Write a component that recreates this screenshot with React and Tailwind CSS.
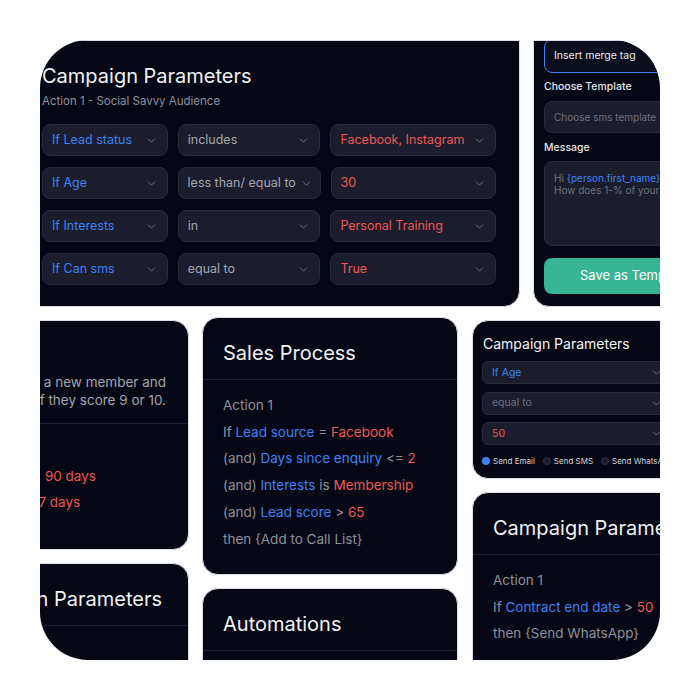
import { ChevronDown } from 'lucide-react';

// Colour tokens used across the cards
const BLUE = 'text-[#3b82f6]';
const RED = 'text-[#ec5854]';
const GRAY = 'text-[#8e919c]';

const BIG_ROWS = [
  { field: 'If Lead status', op: 'includes', value: 'Facebook, Instagram' },
  { field: 'If Age', op: 'less than/ equal to', value: '30' },
  { field: 'If Interests', op: 'in', value: 'Personal Training' },
  { field: 'If Can sms', op: 'equal to', value: 'True' },
];

function Select({ children, tone, className = '' }) {
  return (
    <div
      className={`flex items-center justify-between gap-1 rounded-lg border border-[#2a2b3a] bg-[#1c1d2c] pl-[9px] pr-[9px] ${className}`}
    >
      <span className={`whitespace-nowrap ${tone}`}>{children}</span>
      <ChevronDown size={13} strokeWidth={1.8} className="shrink-0 text-[#6b6e7b]" />
    </div>
  );
}

function Card({ className = '', children }) {
  return (
    <div className={`shrink-0 overflow-hidden rounded-[16px] border border-[#dcdde3] bg-[#050714] ${className}`}>
      {children}
    </div>
  );
}

function CardHead({ title, className = '' }) {
  return (
    <div className={`border-b border-[#1d2030] px-5 pt-[21px] pb-3 ${className}`}>
      <h3 className="whitespace-nowrap text-[20px] leading-7 text-[#f1f2f4]">{title}</h3>
    </div>
  );
}

// ─── Top row ────────────────────────────────────────────────────────────────
function BigParams() {
  return (
    <Card className="w-[499px] h-[267px] rounded-t-none pl-5 pr-[23px] pt-[21px]">
      <h2 className="whitespace-nowrap text-[20px] leading-7 text-[#f1f2f4]">Campaign Parameters</h2>
      <p className="mt-[3px] whitespace-nowrap text-[11.5px] leading-4 text-[#8e919c]">
        Action 1 - Social Savvy Audience
      </p>
      <div className="mt-[15px] flex flex-col gap-[11px] text-[12.5px]">
        {BIG_ROWS.map(r => (
          <div key={r.field} className="flex gap-[10px]">
            <Select tone={BLUE} className="h-8 w-[126px]">{r.field}</Select>
            <Select tone="text-[#a3a5ae]" className="h-8 w-[143px]">{r.op}</Select>
            <Select tone={RED} className="h-8 w-[166px]">{r.value}</Select>
          </div>
        ))}
      </div>
    </Card>
  );
}

function SmsTemplate() {
  return (
    <Card className="w-[202px] h-[267px] rounded-t-none px-[10px] text-[10.5px]">
      <div className="-mt-[2px] flex h-[34px] items-center rounded-lg border border-[#3b82f6] bg-[#0b0e1d] px-[9px] text-[#e8e9ec]">
        Insert merge tag
      </div>
      <p className="mt-[6px] leading-4 font-medium text-[#e3e4e8]">Choose Template</p>
      <div className="mt-[6px] flex h-8 items-center rounded-lg border border-[#2a2b3a] bg-[#1c1d2c] px-[9px] text-[10px] text-[#6d707c] whitespace-nowrap">
        Choose sms template
      </div>
      <p className="mt-[7px] leading-4 font-medium text-[#e3e4e8]">Message</p>
      <div className="mt-[5px] h-[85px] rounded-lg border border-[#2a2b3a] bg-[#1c1d2c] px-[9px] pt-[10px] text-[10px] leading-[12px] text-[#6d707c] whitespace-nowrap">
        <p>Hi <span className={BLUE}>{'{person.first_name}'}</span>,</p>
        <p>How does 1-% of your ad spend sound?</p>
      </div>
      <button className="mt-3 h-9 w-full rounded-lg bg-[#38b593] text-[13px] text-white">
        Save as Template
      </button>
    </Card>
  );
}

// ─── Column A ───────────────────────────────────────────────────────────────
function NpsCard() {
  return (
    <Card className="w-[260px] h-[230px]">
      <div className="border-b border-[#1d2030] pl-5 pr-[22px] pt-[21px] pb-[14px]">
        <h3 className="whitespace-nowrap text-[20px] leading-7 text-[#f1f2f4]">Referrals</h3>
        <div className="mt-[3px] flex flex-col items-end text-[13.5px] leading-[18px] text-[#a3a5ae]">
          <p className="whitespace-nowrap">Send an NPS survey to a new member and</p>
          <p className="whitespace-nowrap">ask for a review if they score 9 or 10.</p>
        </div>
      </div>
      <div className={`px-5 pt-3 text-[13.5px] leading-[26.7px] whitespace-nowrap ${GRAY}`}>
        <p>Action 1</p>
        <p>If Member for <span className={`ml-1 ${RED}`}>90 days</span></p>
        <p>(and) Visits &gt; <span className={RED}>7 days</span></p>
      </div>
    </Card>
  );
}

// ─── Column B ───────────────────────────────────────────────────────────────
function SalesCard() {
  return (
    <Card className="w-[256px] h-[258px]">
      <CardHead title="Sales Process" />
      <div className={`px-5 pt-3 text-[13.5px] leading-[26.7px] whitespace-nowrap ${GRAY}`}>
        <p>Action 1</p>
        <p>If <span className={BLUE}>Lead source</span> = <span className={RED}>Facebook</span></p>
        <p>(and) <span className={BLUE}>Days since enquiry</span> &lt;= <span className={RED}>2</span></p>
        <p>(and) <span className={BLUE}>Interests</span> is <span className={RED}>Membership</span></p>
        <p>(and) <span className={BLUE}>Lead score</span> &gt; <span className={RED}>65</span></p>
        <p>then {'{Add to Call List}'}</p>
      </div>
    </Card>
  );
}

// ─── Column C ───────────────────────────────────────────────────────────────
function SmallParams() {
  const channels = [
    { label: 'Send Email', on: true },
    { label: 'Send SMS' },
    { label: 'Send WhatsApp' },
  ];
  return (
    <Card className="w-[230px] h-[159px] px-[9px] pt-[13px]">
      <h3 className="pl-px whitespace-nowrap text-[14px] leading-5 text-[#f1f2f4]">Campaign Parameters</h3>
      <div className="mt-[7px] flex flex-col gap-[7.5px] text-[10.5px]">
        <Select tone={BLUE} className="h-[23px] w-[191px] rounded-md">If Age</Select>
        <Select tone="text-[#6d707c]" className="h-[23px] w-[191px] rounded-md">equal to</Select>
        <Select tone={RED} className="h-[23px] w-[191px] rounded-md">50</Select>
      </div>
      <div className="mt-[10px] flex items-center gap-[8px] text-[8px] leading-3 text-[#d4d5da] whitespace-nowrap">
        {channels.map(c => (
          <span key={c.label} className="flex items-center gap-[3px]">
            <span
              className={
                c.on
                  ? 'h-[8px] w-[8px] rounded-full bg-[#3b82f6]'
                  : 'h-[8px] w-[8px] rounded-full border border-[#2f3242] bg-[#1c1d2c]'
              }
            />
            {c.label}
          </span>
        ))}
      </div>
    </Card>
  );
}

function WhatsAppCard() {
  return (
    <Card className="w-[256px] h-[220px]">
      <CardHead title="Campaign Parameters" />
      <div className={`px-5 pt-3 text-[13.5px] leading-[26.7px] whitespace-nowrap ${GRAY}`}>
        <p>Action 1</p>
        <p>If <span className={BLUE}>Contract end date</span> &gt; <span className={RED}>50</span></p>
        <p>then {'{Send WhatsApp}'}</p>
      </div>
    </Card>
  );
}

export default function App() {
  return (
    <div className="h-[700px] w-[700px] bg-white p-10 font-['Inter','Noto_Sans',sans-serif]">
      <div className="h-[620px] w-[620px] overflow-hidden rounded-[48px] bg-white">
        <div className="flex flex-col gap-[10px]">
          <div className="-ml-[19px] flex gap-[13px]">
            <BigParams />
            <SmsTemplate />
          </div>
          <div className="-ml-[111px] flex items-start gap-[13px]">
            <div className="mt-[3px] flex shrink-0 flex-col gap-[13px]">
              <NpsCard />
              <Card className="w-[260px] h-[200px]">
                <div className="flex justify-end border-b border-[#1d2030] pr-[26px] pt-[21px] pb-3">
                  <h3 className="whitespace-nowrap text-[20px] leading-7 text-[#f1f2f4]">Campaign Parameters</h3>
                </div>
              </Card>
            </div>
            <div className="flex shrink-0 flex-col gap-[13px]">
              <SalesCard />
              <Card className="w-[256px] h-[200px]">
                <CardHead title="Automations" />
                <div className={`px-5 pt-3 text-[13.5px] leading-[26.7px] ${GRAY}`}>
                  <p>Action 1</p>
                </div>
              </Card>
            </div>
            <div className="ml-px mt-[3px] flex shrink-0 flex-col gap-[13px]">
              <SmallParams />
              <WhatsAppCard />
            </div>
          </div>
        </div>
      </div>
    </div>
  );
}
